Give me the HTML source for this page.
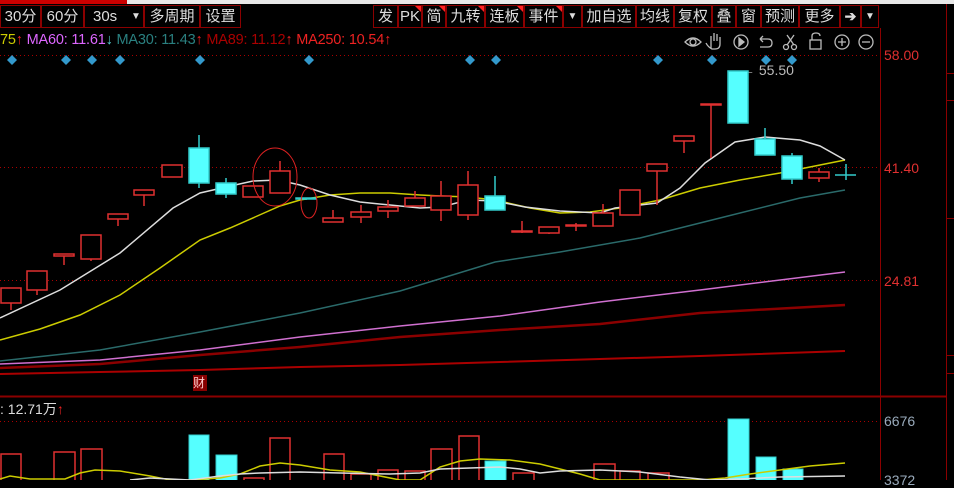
<!DOCTYPE html>
<html><head><meta charset="utf-8"><style>
*{margin:0;padding:0;box-sizing:border-box}
body{width:954px;height:480px;background:#000;overflow:hidden;position:relative;font-family:"Liberation Sans","Noto Sans CJK SC",sans-serif}
.top{position:absolute;left:0;top:0;width:954px;height:4px;background:#e8e8e8}
.top i{position:absolute;left:0;top:0;width:127px;height:4px;background:#c00}
.tb{position:absolute;top:5px;height:23px;border:1px solid #8b0000;color:#ddd;font-size:15px;line-height:21px;text-align:center;letter-spacing:0}
.flag{position:absolute;right:0;top:0;width:0;height:0;border-top:6px solid #f22;border-left:6px solid transparent}
.ma{position:absolute;top:32px;left:0;font-size:14.5px;white-space:nowrap;letter-spacing:-0.2px}
.ax{position:absolute;left:884px;font-size:14px}
</style></head><body>
<div class="top"><i></i></div>
<div class="tb" style="left:0;width:41px">30分</div>
<div class="tb" style="left:41px;width:43px">60分</div>
<div class="tb" style="left:84px;width:60px;text-align:left;padding-left:8px">30s<span style="position:absolute;left:46px;top:0;font-size:10px">▼</span></div>
<div class="tb" style="left:144px;width:56px">多周期</div>
<div class="tb" style="left:200px;width:41px">设置</div>
<div class="tb" style="left:373px;width:25px">发</div>
<div class="tb" style="left:398px;width:24px">PK<b class="flag"></b></div>
<div class="tb" style="left:422px;width:24px">简<b class="flag"></b></div>
<div class="tb" style="left:446px;width:39px">九转<b class="flag"></b></div>
<div class="tb" style="left:485px;width:39px">连板<b class="flag"></b></div>
<div class="tb" style="left:524px;width:39px">事件<b class="flag"></b></div>
<div class="tb" style="left:563px;width:19px;font-size:10px">▼</div>
<div class="tb" style="left:582px;width:54px">加自选</div>
<div class="tb" style="left:636px;width:38px">均线</div>
<div class="tb" style="left:674px;width:38px">复权</div>
<div class="tb" style="left:712px;width:24px">叠</div>
<div class="tb" style="left:736px;width:25px">窗</div>
<div class="tb" style="left:761px;width:38px">预测</div>
<div class="tb" style="left:799px;width:41px">更多</div>
<div class="tb" style="left:840px;width:21px;font-size:14px;font-weight:bold">➔</div>
<div class="tb" style="left:861px;width:18px;font-size:10px">▼</div>
<div class="ma"><span style="color:#cc0">75</span><span style="color:#e22">↑</span> <span style="color:#d6f">MA60: 11.61</span><span style="color:#5cc">↓</span> <span style="color:#2a8080">MA30: 11.43</span><span style="color:#e22">↑</span> <span style="color:#a00">MA89: 11.12</span><span style="color:#e22">↑</span> <span style="color:#e22">MA250: 10.54↑</span></div>
<div class="ax" style="top:47px;color:#e03030">58.00</div>
<div class="ax" style="top:160px;color:#e03030">41.40</div>
<div class="ax" style="top:273px;color:#e03030">24.81</div>
<div class="ax" style="top:413px;color:#9ab">6676</div>
<div class="ax" style="top:472px;color:#9ab">3372</div>
<div style="position:absolute;left:0;top:399px;font-size:14px;color:#ddd">: 12.71万<span style="color:#e22">↑</span></div>
<div style="position:absolute;left:741px;top:62px;font-size:14px;color:#bbb">← 55.50</div>
<div style="position:absolute;left:193px;top:375px;width:14px;height:16px;background:#800;color:#fcc;font-size:12px;line-height:16px">财</div>
<svg width="954" height="480" style="position:absolute;left:0;top:0" xmlns="http://www.w3.org/2000/svg">
<g stroke="#8b0000" stroke-width="1" fill="none">
<line x1="880.5" y1="28" x2="880.5" y2="480"/>
<line x1="946.5" y1="4" x2="946.5" y2="480"/>
<line x1="0" y1="396.5" x2="946" y2="396.5" stroke-width="2"/>
<line x1="946" y1="73.5" x2="954" y2="73.5"/><line x1="946" y1="100.5" x2="954" y2="100.5"/><line x1="946" y1="218.5" x2="954" y2="218.5"/><line x1="946" y1="355.5" x2="954" y2="355.5"/><line x1="946" y1="373.5" x2="954" y2="373.5"/>
</g>
<g stroke="#a00" stroke-dasharray="1,3">
<line x1="0" y1="55.5" x2="880" y2="55.5"/><line x1="0" y1="167.5" x2="880" y2="167.5"/><line x1="0" y1="280.5" x2="880" y2="280.5"/><line x1="0" y1="421.5" x2="880" y2="421.5"/>
</g>
<g fill="#39c">
<path d="M12 55l5 5-5 5-5-5z"/><path d="M66 55l5 5-5 5-5-5z"/><path d="M92 55l5 5-5 5-5-5z"/><path d="M120 55l5 5-5 5-5-5z"/><path d="M200 55l5 5-5 5-5-5z"/><path d="M309 55l5 5-5 5-5-5z"/><path d="M470 55l5 5-5 5-5-5z"/><path d="M496 55l5 5-5 5-5-5z"/><path d="M658 55l5 5-5 5-5-5z"/><path d="M712 55l5 5-5 5-5-5z"/><path d="M766 55l5 5-5 5-5-5z"/><path d="M792 55l5 5-5 5-5-5z"/>
</g>
<g stroke="#bbb" stroke-width="1.3" fill="none">
<path d="M685 42q8-8 16 0q-8 8-16 0z"/><circle cx="693" cy="42" r="3"/>
<path d="M711 49v-8v-5m3 5v-8m3 8v-7m3 8v-5v7q0 5-5 5h-3q-4-2-6-6"/>
<circle cx="741" cy="42" r="7"/><path d="M739 38l5 4-5 4z" fill="#bbb"/>
<path d="M760 39h8q4 0 4 4t-4 4h-8m0-8l3-3m-3 3l3 3"/>
<circle cx="786" cy="47" r="2.5"/><circle cx="794" cy="47" r="2.5"/><path d="M787 45l7-10m0 10l-7-10"/>
<rect x="810" y="40" width="11" height="9"/><path d="M812 40v-4q0-3 4-3t4 3"/>
<circle cx="842" cy="42" r="7"/><path d="M838 42h8m-4-4v8"/>
<circle cx="866" cy="42" r="7"/><path d="M862 42h8"/>
</g>
<g fill="none" stroke-width="1.5">
<polyline stroke="#a00" stroke-width="2" points="0,374 100,372 200,370 300,367 400,365 500,362 600,359 700,356 845,351"/>
<polyline stroke="#8b0000" stroke-width="2.5" points="0,368 100,364 200,355 300,347 400,337 500,330 600,324 700,313 845,305"/>
<polyline stroke="#d070d0" points="0,364 100,360 200,350 300,337 400,326 500,316 600,302 700,290 845,272"/>
<polyline stroke="#2a6a6a" points="0,361 100,350 200,332 300,313 400,291 495,262 560,252 640,238 720,218 800,198 845,190"/>
<polyline stroke="#cc0" points="0,340 40,329 80,315 120,295 160,268 200,240 230,228 255,217 280,206 300,200 330,195 360,193 390,193 420,195 441,196 468,197 495,200 530,208 560,213 590,212 620,208 660,200 700,188 740,180 780,173 820,165 845,160"/>
<polyline stroke="#ddd" points="0,318 60,290 120,253 173,208 200,193 226,187 253,181 278,180 300,185 330,195 360,202 390,205 420,208 441,207 468,200 495,201 525,207 560,211 600,213 615,208 657,203 680,188 705,163 735,142 765,137 800,140 820,146 845,160"/>
</g>
<g stroke="#e03030" stroke-width="1.5" fill="#000">
<line x1="11" y1="288" x2="11" y2="310"/><rect x="1" y="288" width="20" height="15"/>
<line x1="37" y1="271" x2="37" y2="295"/><rect x="27" y="271" width="20" height="19"/>
<line x1="64" y1="254" x2="64" y2="265"/><rect x="54" y="254" width="20" height="2"/>
<line x1="91" y1="235" x2="91" y2="261"/><rect x="81" y="235" width="20" height="24"/>
<line x1="118" y1="214" x2="118" y2="226"/><rect x="108" y="214" width="20" height="5"/>
<line x1="144" y1="190" x2="144" y2="206"/><rect x="134" y="190" width="20" height="5"/>
<rect x="162" y="165" width="20" height="12"/>
<rect x="243" y="186" width="20" height="11"/>
<line x1="280" y1="161" x2="280" y2="171"/><rect x="270" y="171" width="20" height="22"/>
<line x1="333" y1="210" x2="333" y2="218"/><rect x="323" y="218" width="20" height="4"/>
<line x1="361" y1="205" x2="361" y2="223"/><rect x="351" y="212" width="20" height="5"/>
<line x1="388" y1="200" x2="388" y2="218"/><rect x="378" y="207" width="20" height="4"/>
<line x1="415" y1="191" x2="415" y2="206"/><rect x="405" y="198" width="20" height="8"/>
<line x1="441" y1="181" x2="441" y2="221"/><rect x="431" y="196" width="20" height="14"/>
<line x1="468" y1="171" x2="468" y2="220"/><rect x="458" y="185" width="20" height="30"/>
<line x1="522" y1="221" x2="522" y2="233"/><rect x="512" y="231" width="20" height="1"/>
<line x1="549" y1="227" x2="549" y2="234"/><rect x="539" y="227" width="20" height="6"/>
<line x1="576" y1="223" x2="576" y2="231"/><rect x="566" y="225" width="20" height="1"/>
<line x1="603" y1="204" x2="603" y2="226"/><rect x="593" y="213" width="20" height="13"/>
<rect x="620" y="190" width="20" height="25"/>
<line x1="657" y1="171" x2="657" y2="205"/><rect x="647" y="164" width="20" height="7"/>
<line x1="684" y1="141" x2="684" y2="153"/><rect x="674" y="136" width="20" height="5"/>
<line x1="711" y1="104" x2="711" y2="158"/><rect x="701" y="104" width="20" height="1"/>
<line x1="819" y1="168" x2="819" y2="182"/><rect x="809" y="172" width="20" height="6"/>
</g>
<g stroke="#3cc" stroke-width="1.5" fill="#5ff">
<line x1="199" y1="135" x2="199" y2="188"/><rect x="189" y="148" width="20" height="35"/>
<line x1="226" y1="178" x2="226" y2="198"/><rect x="216" y="183" width="20" height="11"/>
<line x1="306" y1="198" x2="306" y2="200"/><rect x="296" y="198" width="20" height="1"/>
<line x1="495" y1="176" x2="495" y2="210"/><rect x="485" y="196" width="20" height="14"/>
<rect x="728" y="71" width="20" height="52"/>
<line x1="765" y1="128" x2="765" y2="155"/><rect x="755" y="139" width="20" height="16"/>
<line x1="792" y1="153" x2="792" y2="184"/><rect x="782" y="156" width="20" height="23"/>
<line x1="846" y1="164" x2="846" y2="180"/><line x1="835" y1="175" x2="856" y2="175"/>
</g>
<g fill="none" stroke="#d22" stroke-width="1">
<ellipse cx="275" cy="177" rx="22" ry="29"/><ellipse cx="309" cy="203" rx="8" ry="15"/>
</g>
<g stroke="#e03030" stroke-width="1.5" fill="#000">
<rect x="1" y="454" width="20" height="30"/><rect x="54" y="452" width="21" height="30"/><rect x="81" y="449" width="21" height="35"/>
<rect x="244" y="478" width="20" height="10"/><rect x="270" y="438" width="20" height="45"/><rect x="324" y="454" width="20" height="30"/>
<rect x="351" y="474" width="20" height="10"/><rect x="378" y="470" width="20" height="12"/><rect x="405" y="471" width="20" height="12"/>
<rect x="431" y="449" width="21" height="35"/><rect x="459" y="436" width="20" height="48"/><rect x="513" y="473" width="21" height="10"/>
<rect x="594" y="464" width="21" height="20"/><rect x="620" y="471" width="20" height="12"/><rect x="648" y="473" width="21" height="10"/>
</g>
<g stroke="#3cc" fill="#5ff">
<rect x="189" y="435" width="20" height="48"/><rect x="216" y="455" width="21" height="28"/><rect x="485" y="461" width="21" height="22"/>
<rect x="728" y="419" width="21" height="64"/><rect x="756" y="457" width="20" height="26"/><rect x="783" y="469" width="20" height="14"/>
</g>
<g fill="none" stroke-width="1.5">
<polyline stroke="#cc0" points="0,479 10,476 30,479 65,479 80,473 95,470 120,471 150,476 170,480 190,480 220,478 240,474 260,466 280,463 300,465 330,470 360,472 380,476 400,480 420,480 440,467 460,461 480,459 510,460 540,464 560,469 580,474 600,480 700,480 725,478 750,474 780,470 810,466 845,463"/>
<polyline stroke="#ddd" points="130,480 150,478 170,479 190,480 220,476 240,474 260,473 300,472 340,473 390,474 420,473 440,469 500,467 520,469 540,473 560,471 600,470 640,472 680,477 710,480 740,479 780,477 845,476"/>
</g>
</svg>
</body></html>
